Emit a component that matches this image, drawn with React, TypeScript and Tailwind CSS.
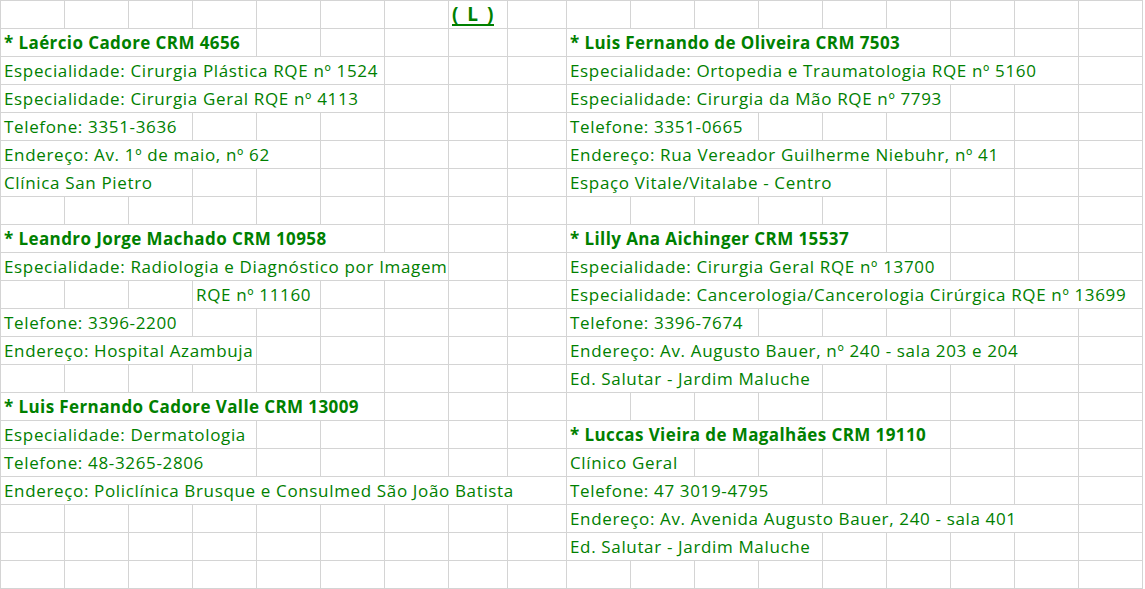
type Seg = { col: number; span: number; text: string; bold?: boolean; title?: boolean };

const colWidths = [64, 64, 64, 64, 64, 64, 64, 59, 59, 64, 64, 64, 64, 64, 64, 64, 64, 64];

const L = 0;
const R = 9;

const rows: Seg[][] = [
  [{ col: 7, span: 1, text: "( L )", bold: true, title: true }],
  [
    { col: L, span: 4, text: "* Laércio Cadore CRM 4656", bold: true },
    { col: R, span: 6, text: "* Luis Fernando de Oliveira CRM 7503", bold: true },
  ],
  [
    { col: L, span: 6, text: "Especialidade: Cirurgia Plástica RQE nº 1524" },
    { col: R, span: 8, text: "Especialidade: Ortopedia e Traumatologia RQE nº 5160" },
  ],
  [
    { col: L, span: 6, text: "Especialidade: Cirurgia Geral RQE nº 4113" },
    { col: R, span: 6, text: "Especialidade: Cirurgia da Mão RQE nº 7793" },
  ],
  [
    { col: L, span: 3, text: "Telefone: 3351-3636" },
    { col: R, span: 3, text: "Telefone: 3351-0665" },
  ],
  [
    { col: L, span: 5, text: "Endereço: Av. 1º de maio, nº 62" },
    { col: R, span: 7, text: "Endereço: Rua Vereador Guilherme Niebuhr, nº 41" },
  ],
  [
    { col: L, span: 3, text: "Clínica San Pietro" },
    { col: R, span: 5, text: "Espaço Vitale/Vitalabe - Centro" },
  ],
  [],
  [
    { col: L, span: 6, text: "* Leandro Jorge Machado CRM 10958", bold: true },
    { col: R, span: 5, text: "* Lilly Ana Aichinger CRM 15537", bold: true },
  ],
  [
    { col: L, span: 7, text: "Especialidade: Radiologia e Diagnóstico por Imagem" },
    { col: R, span: 6, text: "Especialidade: Cirurgia Geral RQE nº 13700" },
  ],
  [
    { col: 3, span: 2, text: "RQE nº 11160" },
    { col: R, span: 9, text: "Especialidade: Cancerologia/Cancerologia Cirúrgica RQE nº 13699" },
  ],
  [
    { col: L, span: 3, text: "Telefone: 3396-2200" },
    { col: R, span: 3, text: "Telefone: 3396-7674" },
  ],
  [
    { col: L, span: 4, text: "Endereço: Hospital Azambuja" },
    { col: R, span: 8, text: "Endereço: Av. Augusto Bauer, nº 240 - sala 203 e 204" },
  ],
  [{ col: R, span: 4, text: "Ed. Salutar - Jardim Maluche" }],
  [{ col: L, span: 6, text: "* Luis Fernando Cadore Valle CRM 13009", bold: true }],
  [
    { col: L, span: 4, text: "Especialidade: Dermatologia" },
    { col: R, span: 6, text: "* Luccas Vieira de Magalhães CRM 19110", bold: true },
  ],
  [
    { col: L, span: 4, text: "Telefone: 48-3265-2806" },
    { col: R, span: 2, text: "Clínico Geral" },
  ],
  [
    { col: L, span: 9, text: "Endereço: Policlínica Brusque e Consulmed São João Batista" },
    { col: R, span: 4, text: "Telefone: 47 3019-4795" },
  ],
  [{ col: R, span: 8, text: "Endereço: Av. Avenida Augusto Bauer, 240 - sala 401" }],
  [{ col: R, span: 4, text: "Ed. Salutar - Jardim Maluche" }],
  [],
];

function cellText(seg: Seg) {
  if (seg.title)
    return "text-[19px] font-bold tracking-[0.5px] [word-spacing:3px] underline decoration-2 underline-offset-[3px]";
  if (seg.bold) return "font-bold tracking-[0.4px]";
  return "tracking-[0.65px]";
}

function Row({ segs }: { segs: Seg[] }) {
  const cells = [];
  let c = 0;
  while (c < colWidths.length) {
    const seg = segs.find((s) => s.col === c);
    const span = seg ? seg.span : 1;
    // spilled text hides the grid lines it runs over, so one wide cell stands in for the span
    const width = colWidths.slice(c, c + span).reduce((a, b) => a + b, 0);
    cells.push(
      <div
        key={c}
        className="h-[27px] shrink-0 whitespace-nowrap border-r border-[#d4d4d4] pl-[3px] leading-[27px]"
        style={{ width }}
      >
        {seg && <span className={cellText(seg)}>{seg.text}</span>}
      </div>
    );
    c += span;
  }
  return <div className="flex border-b border-[#d4d4d4]">{cells}</div>;
}

export default function App() {
  return (
    <div className="min-h-screen bg-white">
      <div
        className="w-[1143px] border-l border-t border-[#d4d4d4] text-[17px] text-[#008000]"
        style={{ fontFamily: '"Open Sans", "Noto Sans", sans-serif' }}
      >
        {rows.map((segs, i) => (
          <Row key={i} segs={segs} />
        ))}
      </div>
    </div>
  );
}
